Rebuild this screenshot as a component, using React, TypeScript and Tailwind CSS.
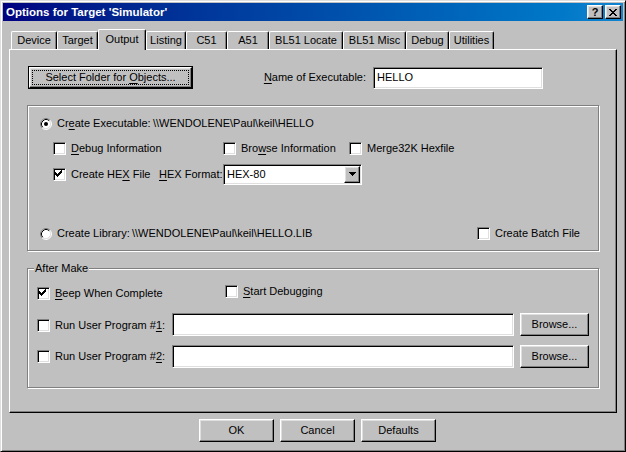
import React from "react";

const raised =
  "border border-t-white border-l-white border-r-black border-b-black shadow-[inset_-1px_-1px_#808080,inset_1px_1px_#dfdfdf]";
const sunken =
  "border border-t-[#808080] border-l-[#808080] border-r-white border-b-white shadow-[inset_1px_1px_#000,inset_-1px_-1px_#dfdfdf]";
const etched = "border border-[#808080] shadow-[1px_1px_0_#fff,inset_1px_1px_0_#fff]";

function Check({ checked }: { checked?: boolean }) {
  const rows = [2, 3, 4, 3, 2, 1, 0];
  return (
    <span className={`block w-[13px] h-[13px] shrink-0 bg-white ${sunken}`}>
      {checked && (
        <svg width="11" height="11" viewBox="0 0 11 11" className="block" shapeRendering="crispEdges">
          {rows.map((y, i) => (
            <rect key={i} x={1 + i} y={1 + y} width="1" height="3" fill="#000" />
          ))}
        </svg>
      )}
    </span>
  );
}

function Radio({ checked }: { checked?: boolean }) {
  return (
    <svg width="12" height="12" viewBox="0 0 12 12" className="block shrink-0">
      <circle cx="6" cy="6" r="5" fill="#fff" />
      <path d="M2.11 9.89 A5.5 5.5 0 0 1 9.89 2.11" fill="none" stroke="#808080" />
      <path d="M9.89 2.11 A5.5 5.5 0 0 1 2.11 9.89" fill="none" stroke="#fff" />
      <path d="M2.82 9.18 A4.5 4.5 0 0 1 9.18 2.82" fill="none" stroke="#000" />
      <path d="M9.18 2.82 A4.5 4.5 0 0 1 2.82 9.18" fill="none" stroke="#dfdfdf" />
      {checked && <circle cx="6" cy="6" r="2" fill="#000" />}
    </svg>
  );
}

function CheckItem({
  checked,
  children,
  className = "",
}: {
  checked?: boolean;
  children: React.ReactNode;
  className?: string;
}) {
  return (
    <div className={`flex items-center shrink-0 ${className}`}>
      <Check checked={checked} />
      <span className="ml-[5px] whitespace-nowrap">{children}</span>
    </div>
  );
}

function U({ children }: { children: React.ReactNode }) {
  return <span className="underline underline-offset-[2px]">{children}</span>;
}

function Btn({ children, className = "" }: { children: React.ReactNode; className?: string }) {
  return (
    <div className={`flex items-center justify-center bg-[#c0c0c0] ${raised} ${className}`}>
      <span className="whitespace-nowrap">{children}</span>
    </div>
  );
}

const tabs: { label: string; w: string; sel?: boolean }[] = [
  { label: "Device", w: "w-[46px]" },
  { label: "Target", w: "w-[41px]" },
  { label: "Output", w: "w-[48px]", sel: true },
  { label: "Listing", w: "w-[40px]" },
  { label: "C51", w: "w-[41px]" },
  { label: "A51", w: "w-[42px]" },
  { label: "BL51 Locate", w: "w-[74px]" },
  { label: "BL51 Misc", w: "w-[63px]" },
  { label: "Debug", w: "w-[43px]" },
  { label: "Utilities", w: "w-[45px]" },
];

export default function App() {
  return (
    <div
      className={`font-['Liberation_Sans',Arial,sans-serif] text-[11px] leading-[13px] text-black w-[626px] h-[452px] bg-[#c0c0c0] border border-t-[#dfdfdf] border-l-[#dfdfdf] border-r-black border-b-black shadow-[inset_1px_1px_#fff,inset_-1px_-1px_#808080] p-[2px] flex flex-col`}
    >
      {/* Title bar */}
      <div className="h-[18px] shrink-0 flex items-center bg-linear-to-r from-[#000080] to-[#1084d0] pl-[3px] pr-[2px]">
        <span className="font-bold text-white text-[11.5px] whitespace-nowrap">Options for Target 'Simulator'</span>
        <div className="ml-auto flex items-center gap-[2px]">
          <div className={`w-[16px] h-[14px] flex items-center justify-center bg-[#c0c0c0] ${raised}`}>
            <span className="font-bold text-[11px] leading-[11px] text-black">?</span>
          </div>
          <div className={`w-[16px] h-[14px] flex items-center justify-center bg-[#c0c0c0] ${raised}`}>
            <svg width="8" height="7" viewBox="0 0 8 7" shapeRendering="crispEdges" className="block">
              <rect x="0" y="0" width="2" height="1" />
              <rect x="6" y="0" width="2" height="1" />
              <rect x="1" y="1" width="2" height="1" />
              <rect x="5" y="1" width="2" height="1" />
              <rect x="2" y="2" width="4" height="1" />
              <rect x="3" y="3" width="2" height="1" />
              <rect x="2" y="4" width="4" height="1" />
              <rect x="1" y="5" width="2" height="1" />
              <rect x="5" y="5" width="2" height="1" />
              <rect x="0" y="6" width="2" height="1" />
              <rect x="6" y="6" width="2" height="1" />
            </svg>
          </div>
        </div>
      </div>

      {/* Tabs */}
      <div className="mt-[8px] h-[20px] shrink-0 flex items-end pl-[8px]">
        {tabs.map((t) =>
          t.sel ? (
            <div
              key={t.label}
              className={`${t.w} h-[21px] -mb-px relative z-10 bg-[#c0c0c0] border-l border-t border-r border-l-white border-t-white border-r-black shadow-[inset_-1px_0_#808080] rounded-t-[2px] flex items-center justify-center pb-[2px] whitespace-nowrap`}
            >
              {t.label}
            </div>
          ) : (
            <div
              key={t.label}
              className={`${t.w} h-[18px] bg-[#c0c0c0] border-l border-t border-r border-l-white border-t-white border-r-black shadow-[inset_-1px_0_#808080] rounded-t-[2px] flex items-center justify-center whitespace-nowrap`}
            >
              {t.label}
            </div>
          )
        )}
      </div>

      {/* Panel */}
      <div className="ml-[6px] w-[608px] h-[364px] shrink-0 border border-t-white border-l-white border-r-black border-b-black shadow-[inset_-1px_-1px_#808080] flex flex-col">
        {/* Row A */}
        <div className="mt-[16px] h-[23px] flex items-center">
          <div className="ml-[18px] w-[165px] h-[23px] border border-black">
            <div className={`w-full h-full p-[2px] ${raised}`}>
              <div className="w-full h-full border border-dotted border-black flex items-center justify-center">
                <span className="whitespace-nowrap">
                  Select Folder for <U>O</U>bjects...
                </span>
              </div>
            </div>
          </div>
          <div className="w-[173px] text-right whitespace-nowrap">
            <U>N</U>ame of Executable:
          </div>
          <div className={`ml-[7px] w-[170px] h-[22px] bg-white flex items-center pl-[3px] ${sunken}`}>
            <span>HELLO</span>
          </div>
        </div>

        {/* Group 1 */}
        <div className={`mt-[16px] ml-[17px] w-[572px] h-[146px] shrink-0 flex flex-col ${etched}`}>
          <div className="mt-[9px] h-[17px] flex items-center pl-[12px]">
            <Radio checked />
            <span className="ml-[5px] w-[96px] whitespace-nowrap">
              Cr<U>e</U>ate Executable:
            </span>
            <span className="whitespace-nowrap">{"\\\\WENDOLENE\\Paul\\keil\\HELLO"}</span>
          </div>
          <div className="mt-[8px] h-[17px] flex items-center pl-[25px]">
            <CheckItem className="w-[170px]">
              <U>D</U>ebug Information
            </CheckItem>
            <CheckItem className="w-[126px]">
              Bro<U>w</U>se Information
            </CheckItem>
            <CheckItem>Merge32K Hexfile</CheckItem>
          </div>
          <div className="mt-[6px] h-[22px] flex items-center pl-[25px]">
            <CheckItem checked className="w-[106px]">
              Create HE<U>X</U> File
            </CheckItem>
            <span className="w-[64px] whitespace-nowrap">
              <U>H</U>EX Format:
            </span>
            <div className={`w-[139px] h-[21px] bg-white flex items-center p-[1px] ${sunken}`}>
              <span className="flex-1 pl-[2px]">HEX-80</span>
              <div className={`w-[16px] h-full flex items-center justify-center bg-[#c0c0c0] ${raised}`}>
                <svg width="7" height="4" viewBox="0 0 7 4" shapeRendering="crispEdges" className="block">
                  <path d="M0 0H7V1H6V2H5V3H4V4H3V3H2V2H1V1H0Z" fill="#000" />
                </svg>
              </div>
            </div>
          </div>
          <div className="mt-[40px] h-[17px] flex items-center pl-[12px]">
            <div className="w-[437px] flex items-center">
              <Radio />
              <span className="ml-[5px] w-[75px] whitespace-nowrap">Create Library:</span>
              <span className="whitespace-nowrap">{"\\\\WENDOLENE\\Paul\\keil\\HELLO.LIB"}</span>
            </div>
            <CheckItem>Create Batch File</CheckItem>
          </div>
        </div>

        {/* Group 2 */}
        <div className={`relative mt-[17px] ml-[17px] w-[572px] h-[120px] shrink-0 flex flex-col ${etched}`}>
          <span className="absolute left-[6px] -top-[7px] px-[1px] bg-[#c0c0c0] whitespace-nowrap">After Make</span>
          <div className="mt-[16px] h-[15px] flex items-start pl-[9px]">
            <CheckItem checked className="w-[188px] mt-[2px]">
              <U>B</U>eep When Complete
            </CheckItem>
            <CheckItem>
              <U>S</U>tart Debugging
            </CheckItem>
          </div>
          <div className="mt-[13px] h-[23px] flex items-center pl-[9px]">
            <CheckItem className="w-[135px] mt-[2px]">
              Run User Program #<U>1</U>:
            </CheckItem>
            <div className={`w-[342px] h-[23px] bg-white ${sunken}`} />
            <Btn className="ml-[6px] w-[69px] h-[23px]">Browse...</Btn>
          </div>
          <div className="mt-[9px] h-[23px] flex items-center pl-[9px]">
            <CheckItem className="w-[135px]">
              Run User Program #<U>2</U>:
            </CheckItem>
            <div className={`w-[342px] h-[23px] bg-white ${sunken}`} />
            <Btn className="ml-[6px] w-[69px] h-[23px]">Browse...</Btn>
          </div>
        </div>
      </div>

      {/* Bottom buttons */}
      <div className="mt-[6px] flex pl-[196px] gap-[6px]">
        <Btn className="w-[75px] h-[23px]">OK</Btn>
        <Btn className="w-[75px] h-[23px]">Cancel</Btn>
        <Btn className="w-[75px] h-[23px]">Defaults</Btn>
      </div>
    </div>
  );
}
